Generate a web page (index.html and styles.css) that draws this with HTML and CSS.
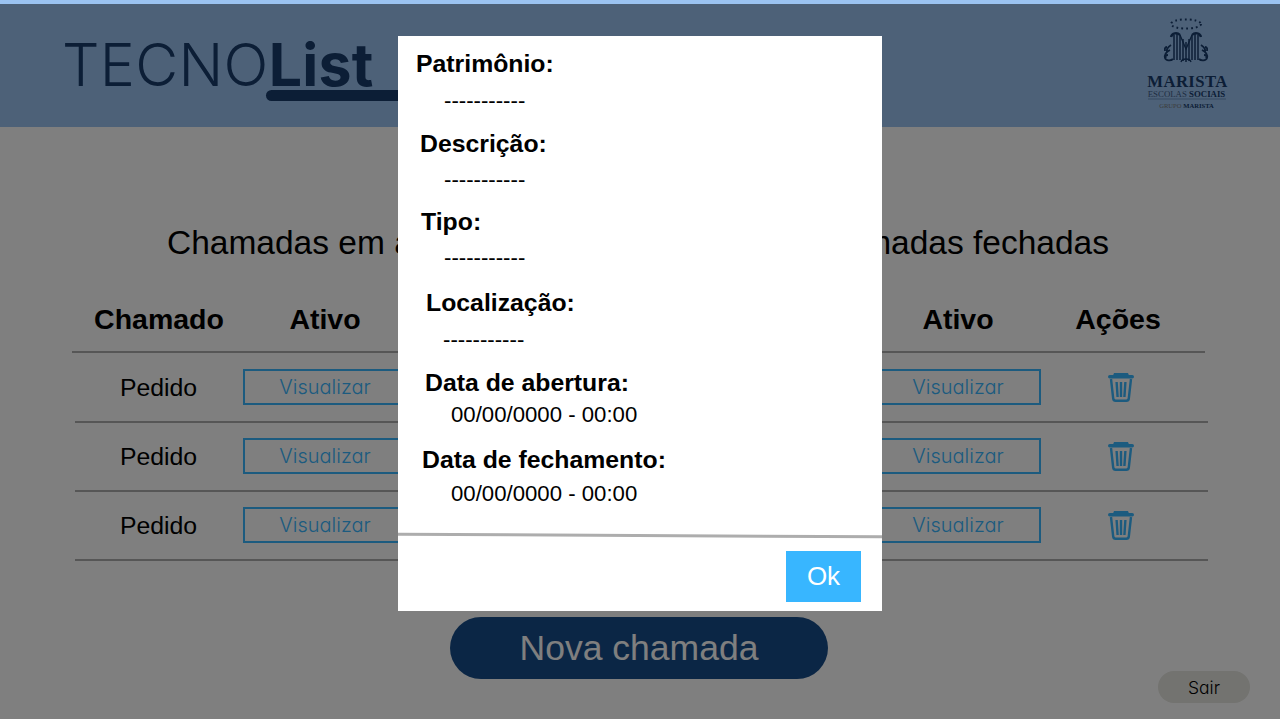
FILE: index.html
```html
<!DOCTYPE html>
<html lang="pt-BR">
<head>
    <meta charset="UTF-8">
    <meta name="viewport" content="width=device-width, initial-scale=1.0">
    <title>TECNOList</title>
    <link rel="stylesheet" href="styles.css">
</head>
<body>
    <div class="page">
        <!-- Header -->
        <header class="topo">
            <div class="logo">
                <div class="logo-nome">TECNO<b>List</b></div>
                <div class="logo-traco"></div>
            </div>
            <svg class="marista" width="95" height="100" viewBox="0 0 95 100">
                <ellipse cx="46" cy="12" rx="15" ry="4.6" fill="none" stroke="#183c6c" stroke-width="2" stroke-dasharray="1.8 3"/>
                <g fill="none" stroke="#183c6c">
                    <path d="M31 25c1-4 6-5 9-2M61 25c-1-4-6-5-9-2" stroke-width="2.4"/>
                    <path d="M34 23v25M37 22v26M40 23v25M43 27v22M46 30v20M49 27v22M52 23v25M55 22v26M58 23v25" stroke-width="1.5"/>
                    <path d="M40 23l6 14 6-14M41 50c1-4 9-4 10 0" stroke-width="1.3"/>
                    <path d="M31 33c-3 2-5 4-4 7M27 35c-3 0-2 3-2 4M30 38c-4 2-6 4-5 8 1 3 6 3 8 1M28 43c-2 0-3 1-2 3M61 33c3 2 5 4 4 7M65 35c3 0 2 3 2 4M62 38c4 2 6 4 5 8-1 3-6 3-8 1M64 43c2 0 3 1 2 3" stroke-width="1.8"/>
                </g>
                <text x="47.5" y="75" class="m-nome" text-anchor="middle">MARISTA</text>
                <text x="46.5" y="85" class="m-escolas" text-anchor="middle">ESCOLAS <tspan class="m-forte">SOCIAIS</tspan></text>
                <path d="M8 87h78" stroke="#183c6c" stroke-width=".6" opacity=".6"/>
                <text x="46.5" y="95.5" class="m-grupo" text-anchor="middle">GRUPO <tspan class="m-forte">MARISTA</tspan></text>
            </svg>
        </header>

        <!-- Tabs -->
        <div class="titulos">
            <span>Chamadas em aberto</span>
            <span>Chamadas fechadas</span>
        </div>

        <!-- Table -->
        <div class="tabela">
            <div class="linha cabecalho">
                <div>Chamado</div>
                <div>Ativo</div>
                <div></div>
                <div>Ativo</div>
                <div>Ações</div>
            </div>
            <div class="linha primeira">
                <div>Pedido</div>
                <div><a class="btn-ver">Visualizar</a></div>
                <div></div>
                <div><a class="btn-ver">Visualizar</a></div>
                <div>
                    <svg class="lixeira" width="26" height="30" viewBox="0 0 26 30"><path d="M5 3.5L6 1h14l1 2.5z"/><rect y="3" width="26" height="3.6" rx="1.8"/><path class="lixeira-corpo" d="M3 7l2.2 19.5c.2 1.5 1 2.2 2.4 2.2h10.8c1.4 0 2.2-.7 2.4-2.2L23 7M8.6 10l1 15M13 10v15M17.4 10l-1 15"/></svg>
                </div>
            </div>
            <div class="linha">
                <div>Pedido</div>
                <div><a class="btn-ver">Visualizar</a></div>
                <div></div>
                <div><a class="btn-ver">Visualizar</a></div>
                <div>
                    <svg class="lixeira" width="26" height="30" viewBox="0 0 26 30"><path d="M5 3.5L6 1h14l1 2.5z"/><rect y="3" width="26" height="3.6" rx="1.8"/><path class="lixeira-corpo" d="M3 7l2.2 19.5c.2 1.5 1 2.2 2.4 2.2h10.8c1.4 0 2.2-.7 2.4-2.2L23 7M8.6 10l1 15M13 10v15M17.4 10l-1 15"/></svg>
                </div>
            </div>
            <div class="linha">
                <div>Pedido</div>
                <div><a class="btn-ver">Visualizar</a></div>
                <div></div>
                <div><a class="btn-ver">Visualizar</a></div>
                <div>
                    <svg class="lixeira" width="26" height="30" viewBox="0 0 26 30"><path d="M5 3.5L6 1h14l1 2.5z"/><rect y="3" width="26" height="3.6" rx="1.8"/><path class="lixeira-corpo" d="M3 7l2.2 19.5c.2 1.5 1 2.2 2.4 2.2h10.8c1.4 0 2.2-.7 2.4-2.2L23 7M8.6 10l1 15M13 10v15M17.4 10l-1 15"/></svg>
                </div>
            </div>
        </div>

        <!-- Footer -->
        <div class="rodape">
            <button class="btn-nova">Nova chamada</button>
            <button class="btn-sair">Sair</button>
        </div>
    </div>

    <!-- Modal -->
    <div class="overlay"></div>
    <div class="modal">
        <div class="modal-campos">
            <h3 class="rot-patrimonio">Patrimônio:</h3>
            <p class="val-patrimonio">-----------</p>
            <h3 class="rot-descricao">Descrição:</h3>
            <p class="val-descricao">-----------</p>
            <h3 class="rot-tipo">Tipo:</h3>
            <p class="val-tipo">-----------</p>
            <h3 class="rot-local">Localização:</h3>
            <p class="val-local">-----------</p>
            <h3 class="rot-abertura">Data de abertura:</h3>
            <p class="val-abertura">00/00/0000 - 00:00</p>
            <h3 class="rot-fechamento">Data de fechamento:</h3>
            <p class="val-fechamento">00/00/0000 - 00:00</p>
        </div>
        <div class="modal-linha"></div>
        <div class="modal-acoes">
            <button class="btn-ok">Ok</button>
        </div>
    </div>
</body>
</html>
```

FILE: styles.css
```css
body {
    margin: 0;
    font-family: "Liberation Sans", Arial, sans-serif;
    background-color: #fff;
    color: #000;
    overflow: hidden;
}

.page {
    width: 1280px;
    height: 720px;
    display: flex;
    flex-direction: column;
}

.topo {
    height: 127px;
    box-sizing: border-box;
    background-color: #9bc3f1;
    display: flex;
    justify-content: space-between;
    padding: 12px 45px 0 62px;
}

.logo {
    padding-top: 23px;
}

.logo-nome {
    font-family: Inter, sans-serif;
    font-size: 59px;
    font-weight: 350;
    line-height: 60px;
    letter-spacing: .3px;
    color: #183c6c;
}

.logo-nome b {
    font-weight: 700;
    letter-spacing: .2px;
}

.logo-traco {
    width: 200px;
    height: 11px;
    margin: -5px 0 0 204px;
    background-color: #183c6c;
    border-radius: 6px;
}

.m-nome {
    font-family: "Liberation Serif", serif;
    font-size: 16.7px;
    font-weight: 700;
    letter-spacing: .4px;
    fill: #183c6c;
}

.m-escolas {
    font-family: "Liberation Serif", serif;
    font-size: 8.8px;
    fill: #3f5c86;
}

.m-grupo {
    font-family: "Liberation Serif", serif;
    font-size: 6.6px;
    fill: #777;
}

.m-forte {
    font-weight: 700;
    fill: #183c6c;
}

.titulos {
    display: flex;
    justify-content: space-between;
    margin-top: 96px;
    padding: 0 171px 0 167px;
    font-size: 33.5px;
    line-height: 40px;
}

.tabela {
    margin: 25px 0 0 72px;
    width: 1133px;
}

.linha {
    display: grid;
    grid-template-columns: 167px 166px 1fr 152px 174px;
    align-items: center;
    justify-items: center;
    box-sizing: border-box;
    height: 69px;
    margin: 0 -3px 0 3px;
    border-bottom: 2px solid #adadad;
    font-size: 24.8px;
}

.cabecalho {
    grid-template-columns: 174px 158px 1fr 146px 174px;
    height: 65px;
    margin: 0;
    font-size: 28.5px;
    font-weight: 700;
}

.primeira {
    height: 70px;
    padding-top: 1px;
}

.btn-ver {
    display: block;
    box-sizing: border-box;
    width: 165px;
    height: 36px;
    margin-bottom: 2px;
    border: 2px solid #38b6ff;
    font-family: Inter, sans-serif;
    font-feature-settings: "cv11";
    font-weight: 300;
    font-size: 20px;
    line-height: 33px;
    text-align: center;
    color: #38b6ff;
}

.lixeira {
    display: block;
    margin-bottom: 2px;
    fill: #38b6ff;
}

.lixeira-corpo {
    fill: none;
    stroke: #38b6ff;
    stroke-width: 2.4;
}

.rodape {
    display: grid;
    grid-template-columns: 1fr auto 1fr;
    height: 86px;
    margin-top: 56px;
}

.btn-nova {
    grid-column: 2;
    align-self: start;
    width: 378px;
    height: 62px;
    margin-right: 2px;
    border: none;
    border-radius: 31px;
    background-color: #164c8a;
    color: #fff;
    font-family: inherit;
    font-size: 35.5px;
}

.btn-sair {
    grid-column: 3;
    justify-self: end;
    align-self: end;
    width: 92px;
    height: 32px;
    margin-right: 30px;
    padding: 0;
    border: none;
    border-radius: 16px;
    background-color: #e6e6e0;
    color: #000;
    font-family: Inter, sans-serif;
    font-feature-settings: "cv11";
    font-weight: 300;
    font-size: 17.5px;
}

.overlay {
    position: absolute;
    top: 4px;
    left: 0;
    width: 1280px;
    height: 715px;
    background-color: rgba(0, 0, 0, .5);
}

.modal {
    position: absolute;
    top: 36px;
    left: 398px;
    width: 484px;
    height: 575px;
    background-color: #fff;
    display: flex;
    flex-direction: column;
}

.modal-campos {
    flex: 1;
    padding-top: 13px;
}

.modal-campos h3 {
    margin: 15px 0 0;
    padding-bottom: 1px;
    font-size: 24.8px;
    line-height: 29px;
}

.modal-campos p {
    margin: 8px 0 0 46px;
    font-size: 22.2px;
    line-height: 26px;
}

.modal-campos .rot-patrimonio { margin: 0 0 0 18px; }
.modal-campos .val-patrimonio { margin-top: 9px; }
.modal-campos .rot-descricao { margin-left: 22px; }
.modal-campos .rot-tipo { margin: 14px 0 0 23px; }
.modal-campos .rot-local { margin: 17px 0 0 28px; }
.modal-campos .val-local { margin: 9px 0 0 45px; }
.modal-campos .rot-abertura { margin-left: 27px; }
.modal-campos .val-abertura { margin: 4px 0 0 53px; }
.modal-campos .rot-fechamento { margin: 17px 0 0 24px; }
.modal-campos .val-fechamento { margin: 6px 0 0 53px; }

.modal-linha {
    height: 3px;
    background-color: #adadad;
    transform: rotate(.3deg);
}

.modal-acoes {
    display: flex;
    justify-content: flex-end;
    padding: 14px 21px 9px;
}

.btn-ok {
    width: 75px;
    height: 51px;
    border: none;
    background-color: #38b6ff;
    color: #fff;
    font-family: inherit;
    font-size: 26px;
}
```
